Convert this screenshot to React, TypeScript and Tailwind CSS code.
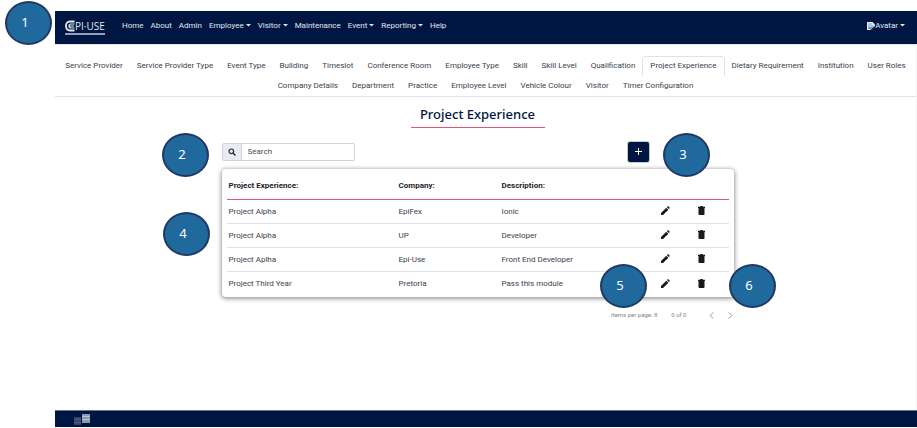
import React from "react";

const navItems = [
  { label: "Home" },
  { label: "About" },
  { label: "Admin" },
  { label: "Employee", menu: true },
  { label: "Visitor", menu: true },
  { label: "Maintenance" },
  { label: "Event", menu: true },
  { label: "Reporting", menu: true },
  { label: "Help" },
];

const tabRows = [
  [
    "Service Provider",
    "Service Provider Type",
    "Event Type",
    "Building",
    "Timeslot",
    "Conference Room",
    "Employee Type",
    "Skill",
    "Skill Level",
    "Qualification",
    "Project Experience",
    "Dietary Requirement",
    "Institution",
    "User Roles",
  ],
  [
    "Company Details",
    "Department",
    "Practice",
    "Employee Level",
    "Vehicle Colour",
    "Visitor",
    "Timer Configuration",
  ],
];

const rows = [
  ["Project Alpha", "EpiFex", "Ionic"],
  ["Project Alpha", "UP", "Developer"],
  ["Project Aplha", "Epi-Use", "Front End Developer"],
  ["Project Third Year", "Pretoria", "Pass this module"],
];

const markers = [
  { n: 1, place: "left-[5px] top-px" },
  { n: 2, place: "left-[162px] top-[133px]" },
  { n: 3, place: "left-[663px] top-[133px]" },
  { n: 4, place: "left-[163px] top-[212px]" },
  { n: 5, place: "left-[600px] top-[264px]" },
  { n: 6, place: "left-[729px] top-[264px]" },
];

function Caret() {
  return (
    <svg viewBox="0 0 5 3" className="h-[3px] w-[5px]" fill="currentColor" aria-hidden="true">
      <path d="M0 0h5L2.500 2.500z" />
    </svg>
  );
}

function Logo() {
  return (
    <a
      href="#"
      aria-label="EPI-USE"
      className="mb-[2px] flex h-[16px] w-[40px] items-center border-b-2 border-slate-400 text-slate-200"
    >
      <svg viewBox="0 0 10 12" className="h-[12px] w-[10px] shrink-0" fill="none" stroke="currentColor" aria-hidden="true">
        <path d="M9.500 1.500H5C2.200 1.500 1 3.500 1 6s1.200 4.500 4 4.500h4.500" strokeWidth="1.800" />
        <path d="M9.500 4H6C4.500 4 4 5 4 6s.5 2 2 2h3.500M4 6h5" strokeWidth="1.200" />
      </svg>
      <span className="font-['Open_Sans',sans-serif] text-[10px] leading-3 font-medium">PI·USE</span>
    </a>
  );
}

function BrokenImage() {
  return (
    <svg viewBox="0 0 8 8" className="h-[8px] w-[8px]" aria-hidden="true">
      <path d="M0 0h5.500L8 2.500V8H0z" fill="#e8eef5" />
      <path d="M1 1h4v2h2v1.500L3 7H1z" fill="#a9c7ee" />
      <path d="M1 7l2-2.500L5 6l2-2v3z" fill="#58a65a" />
      <path d="M8 4L3.500 8H8z" fill="#001642" />
    </svg>
  );
}

function Pencil() {
  return (
    <svg viewBox="0 0 9 9" className="h-[9px] w-[9px]" fill="#16191e" aria-hidden="true">
      <path d="M0 9V7l5.300-5.300 2 2L2 9zM5.900 1.100L7 0l2 2-1.100 1.100z" />
    </svg>
  );
}

function Trash() {
  return (
    <svg viewBox="0 0 7 9" className="h-[9px] w-[7px]" fill="#16191e" aria-hidden="true">
      <path d="M0 .7h2L2.500 0h2L5 .7h2V2H0zM.5 2h6v6q0 1-1 1h-4q-1 0-1-1z" />
    </svg>
  );
}

export default function App() {
  return (
    <div className="relative flex min-h-screen flex-col bg-white pt-[11px] pb-px pl-[55px] font-[Roboto,sans-serif] text-[8px] leading-3 text-[#39424e]">
      <header className="flex h-[33px] items-center bg-[#001642] pr-3 pl-[10px] text-slate-200">
        <Logo />
        <nav className="flex flex-1 gap-[7px] pb-1 pl-[17px]">
          {navItems.map((item) =>
            item.menu ? (
              <button key={item.label} type="button" className="flex items-center gap-[2px]">
                {item.label}
                <Caret />
              </button>
            ) : (
              <a key={item.label} href="#">
                {item.label}
              </a>
            ),
          )}
        </nav>
        <button type="button" className="flex items-center gap-[2px] pb-1">
          <span className="flex items-center">
            <BrokenImage />
            Avatar
          </span>
          <Caret />
        </button>
      </header>

      <div className="flex flex-1 flex-col border-r border-gray-100">
        <nav className="border-t border-b border-[#dfe3e8] pt-[11px]" aria-label="Sections">
          {tabRows.map((tabs, i) => (
            <ul key={i} className="flex h-5 justify-center">
              {tabs.map((tab) => (
                <li key={tab}>
                  <a
                    href="#"
                    className={
                      tab === "Project Experience"
                        ? "block h-5 rounded-t-sm border border-b-0 border-[#dfe3e8] px-[7px] pt-[3px] whitespace-nowrap"
                        : "block h-5 px-[7px] pt-1 whitespace-nowrap"
                    }
                  >
                    {tab}
                  </a>
                </li>
              ))}
            </ul>
          ))}
        </nav>

        <main className="flex-1 pr-4">
          <div className="mx-auto w-[512px]">
            <h1 className="mx-auto mt-2 w-[134px] border-b border-[#e2557f] pb-1 text-center font-['Noto_Sans',sans-serif] text-[13px] leading-[18px] font-medium whitespace-nowrap text-[#001642]">
              Project Experience
            </h1>

            <div className="mt-[14px] flex items-center justify-between pr-[85px]">
              <label className="flex h-[18px] w-[133px] overflow-hidden rounded-[2px] border border-[#ced4da]">
                <span className="flex w-[19px] items-center justify-center border-r border-[#ced4da] bg-[#e9ecef]">
                  <svg viewBox="0 0 8 8" className="h-[8px] w-[8px]" fill="none" stroke="#1f2d45" aria-label="Search">
                    <circle cx="3.300" cy="3.300" r="2.300" strokeWidth="1.200" />
                    <path d="M5 5l2.500 2.500" strokeWidth="1.500" />
                  </svg>
                </span>
                <input
                  type="text"
                  placeholder="Search"
                  className="min-w-0 flex-1 px-[6px] outline-none placeholder:text-[#495057]"
                />
              </label>
              <button
                type="button"
                aria-label="Add"
                className="flex h-5 w-[21px] items-center justify-center rounded-[2px] bg-[#001642] pb-[2px] ring-1 ring-[#c5cad3]"
              >
                <svg viewBox="0 0 7 7" className="h-[7px] w-[7px]" stroke="#ffffff" aria-hidden="true">
                  <path d="M0 3.500h7M3.500 0v7" />
                </svg>
              </button>
            </div>

            <section className="mt-[7px] rounded-[4px] px-[5px] pb-px shadow-[0_1px_4px_1px_rgba(0,0,0,0.4)]">
              <table className="w-full table-fixed border-separate border-spacing-0 text-left">
                <colgroup>
                  <col className="w-[170px]" />
                  <col className="w-[103px]" />
                  <col />
                  <col className="w-[36px]" />
                  <col className="w-[46px]" />
                </colgroup>
                <thead>
                  <tr className="h-[31px] text-[#20242a] *:border-b *:border-[#e2557f]">
                    <th className="px-[2px] pt-1 font-bold">Project Experience:</th>
                    <th className="px-[2px] pt-1 font-bold">Company:</th>
                    <th className="px-[2px] pt-1 font-bold">Description:</th>
                    <th />
                    <th />
                  </tr>
                </thead>
                <tbody>
                  {rows.map((row, i) => (
                    <tr key={i} className="h-6 *:border-b *:border-[#dee2e6] last:*:border-b-0">
                      {row.map((cell) => (
                        <td key={cell} className="px-[2px]">
                          {cell}
                        </td>
                      ))}
                      <td className="pb-[2px]">
                        <button type="button" aria-label="Edit" className="flex pl-[14px]">
                          <Pencil />
                        </button>
                      </td>
                      <td className="pb-[2px]">
                        <button type="button" aria-label="Delete" className="flex pl-[15px]">
                          <Trash />
                        </button>
                      </td>
                    </tr>
                  ))}
                </tbody>
              </table>
            </section>

            <div className="mt-3 flex items-center justify-end text-[6px] text-[#858585]">
              <span>Items per page: 8</span>
              <span className="ml-[14px]">0 of 0</span>
              <button type="button" aria-label="Previous page" className="ml-[22px]">
                <svg viewBox="0 0 5 8" className="h-[7px] w-[5px]" fill="none" stroke="#858585" aria-hidden="true">
                  <path d="M4.500.5L1 4l3.500 3.500" />
                </svg>
              </button>
              <button type="button" aria-label="Next page" className="mr-px ml-[14px]">
                <svg viewBox="0 0 5 8" className="h-[7px] w-[5px]" fill="none" stroke="#858585" aria-hidden="true">
                  <path d="M.5.5L4 4 .5 7.500" />
                </svg>
              </button>
            </div>
          </div>
        </main>
      </div>

      <footer className="flex h-[17px] items-center border-t border-[#66758f] bg-[#001642] pl-[18px]">
        <svg viewBox="0 0 18 13" className="h-[13px] w-[18px]" aria-hidden="true">
          <path d="M1 4h7v8H1z" fill="#35466a" />
          <path d="M9 1h8v9H9z" fill="#8c99b3" />
          <path d="M9 3.500h8M9 6.500h8" stroke="#b7c0d0" strokeWidth="1" />
          <path d="M1 6.500h7M1 9.500h7" stroke="#4b5b7c" strokeWidth="1" />
        </svg>
      </footer>

      {markers.map(({ n, place }) => (
        <div
          key={n}
          className={`absolute flex h-[44px] w-[47px] items-center justify-center rounded-[50%] border-2 border-[#1f3864] bg-[#20699d] pr-[7px] pb-[3px] font-['Noto_Sans',sans-serif] text-[13px] text-white ${place}`}
        >
          {n}
        </div>
      ))}
    </div>
  );
}
